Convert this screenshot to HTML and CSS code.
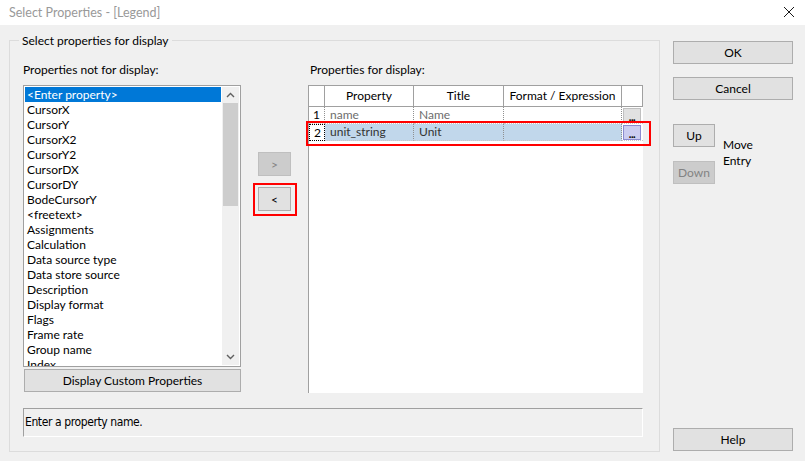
FILE: index.html
```html
<!DOCTYPE html>
<html lang="en">
<head>
    <meta charset="UTF-8">
    <title>Select Properties - [Legend]</title>
    <link rel="stylesheet" href="styles.css">
</head>
<body>
    <div class="titlebar">
        <span class="title">Select Properties - [Legend]</span>
        <svg class="close" width="12" height="12" viewBox="0 0 12 12">
            <path d="M1 1 L11 11 M11 1 L1 11" stroke="#1a1a1a" stroke-width="1" fill="none"/>
        </svg>
    </div>

    <div class="dialog">
        <div class="group">
            <span class="group-title">Select properties for display</span>
            <div class="columns">
                <div class="col-left">
                    <div class="label">Properties not for display:</div>
                    <div class="listbox">
                        <ul class="items">
                            <li class="selected">&lt;Enter property&gt;</li>
                            <li>CursorX</li>
                            <li>CursorY</li>
                            <li>CursorX2</li>
                            <li>CursorY2</li>
                            <li>CursorDX</li>
                            <li>CursorDY</li>
                            <li>BodeCursorY</li>
                            <li>&lt;freetext&gt;</li>
                            <li>Assignments</li>
                            <li>Calculation</li>
                            <li>Data source type</li>
                            <li>Data store source</li>
                            <li>Description</li>
                            <li>Display format</li>
                            <li>Flags</li>
                            <li>Frame rate</li>
                            <li>Group name</li>
                            <li>Index</li>
                        </ul>
                        <div class="scrollbar">
                            <span class="arrow">
                                <svg width="9" height="6" viewBox="0 0 9 6"><path d="M1 5 L4.5 1.5 L8 5" stroke="#606060" stroke-width="1.4" fill="none"/></svg>
                            </span>
                            <span class="thumb"></span>
                            <span class="arrow arrow-down">
                                <svg width="9" height="6" viewBox="0 0 9 6"><path d="M1 1 L4.5 4.5 L8 1" stroke="#606060" stroke-width="1.4" fill="none"/></svg>
                            </span>
                        </div>
                    </div>
                    <button class="btn btn-custom">Display Custom Properties</button>
                </div>

                <div class="col-move">
                    <button class="btn btn-arrow" disabled>&gt;</button>
                    <span class="mark mark-btn"><button class="btn btn-arrow">&lt;</button></span>
                </div>

                <div class="col-right">
                    <div class="label label-right">Properties for display:</div>
                    <div class="grid">
                        <div class="row head">
                            <div class="cell c-num"></div>
                            <div class="cell c-prop">Property</div>
                            <div class="cell c-title">Title</div>
                            <div class="cell c-fmt">Format / Expression</div>
                            <div class="cell c-btn"></div>
                        </div>
                        <div class="row">
                            <div class="cell c-num">1</div>
                            <div class="cell c-prop muted">name</div>
                            <div class="cell c-title muted">Name</div>
                            <div class="cell c-fmt"></div>
                            <div class="cell c-btn"><span class="dots">...</span></div>
                        </div>
                        <div class="row current mark mark-row">
                            <div class="cell c-num focus">2</div>
                            <div class="cell c-prop">unit_string</div>
                            <div class="cell c-title">Unit</div>
                            <div class="cell c-fmt"></div>
                            <div class="cell c-btn"><span class="dots dots-active">...</span></div>
                        </div>
                    </div>
                </div>
            </div>
            <div class="status">Enter a property name.</div>
        </div>

        <div class="side">
            <button class="btn btn-side">OK</button>
            <button class="btn btn-side btn-cancel">Cancel</button>
            <div class="move">
                <div class="move-btns">
                    <button class="btn btn-move">Up</button>
                    <button class="btn btn-move btn-down" disabled>Down</button>
                </div>
                <div class="move-label">Move<br>Entry</div>
            </div>
            <button class="btn btn-side btn-help">Help</button>
        </div>
    </div>
</body>
</html>
```

FILE: styles.css
```css
* {
    box-sizing: border-box;
}
body {
    margin: 0;
    width: 805px;
    height: 461px;
    overflow: hidden;
    background-color: #f0f0f0;
    font-family: Lato, "Noto Sans", sans-serif;
    font-size: 12px;
    color: #000;
}
.titlebar {
    height: 25px;
    background-color: #fff;
    display: flex;
    align-items: center;
    justify-content: space-between;
    padding: 0 10px 1px 9px;
}
.title {
    color: #999;
    font-size: 12.5px;
}
.dialog {
    display: flex;
    padding: 15px 0 0 9px;
}
.group {
    position: relative;
    width: 651px;
    height: 412px;
    border: 1px solid #dcdcdc;
    padding: 21px 0 0 13px;
}
.group-title {
    position: absolute;
    top: -8px;
    left: 9px;
    padding: 0 3px;
    line-height: 15px;
    background-color: #f0f0f0;
}
.columns {
    display: flex;
}
.label {
    line-height: 15px;
    margin-bottom: 8px;
}
.label-right {
    padding-left: 2px;
}
.col-left {
    width: 218px;
    display: flex;
    flex-direction: column;
}
.listbox {
    height: 282px;
    border: 1px solid #a0a0a0;
    background-color: #fff;
    display: flex;
    padding: 1px;
    overflow: hidden;
}
.items {
    list-style: none;
    margin: 0;
    padding: 0;
    width: 197px;
}
.items li {
    height: 15px;
    line-height: 15px;
    padding-left: 2px;
    white-space: nowrap;
}
.items li.selected {
    background-color: #0078d7;
    color: #fff;
}
.scrollbar {
    width: 17px;
    margin-left: 1px;
    background-color: #f0f0f0;
    display: flex;
    flex-direction: column;
}
.arrow {
    height: 16px;
    display: flex;
    align-items: center;
    justify-content: center;
}
.arrow-down {
    margin-top: auto;
}
.thumb {
    height: 103px;
    margin: 0 1px;
    background-color: #cdcdcd;
}
.btn {
    font-family: inherit;
    font-size: 12px;
    color: #000;
    background-color: #e1e1e1;
    border: 1px solid #adadad;
    padding: 0;
    height: 23px;
}
.btn:disabled {
    background-color: #cccccc;
    border-color: #bfbfbf;
    color: #838383;
}
.btn-custom {
    margin: 2px 0 0 1px;
    width: 217px;
}
.col-move {
    margin-left: 17px;
    width: 33px;
    display: flex;
    flex-direction: column;
    padding-top: 90px;
}
.btn-arrow {
    width: 33px;
    height: 24px;
}
.mark {
    position: relative;
}
.mark::after {
    content: "";
    position: absolute;
    border: 2px solid #ff0000;
    pointer-events: none;
}
.mark-btn {
    display: block;
    margin-top: 11px;
}
.mark-btn::after {
    top: -4px;
    left: -5px;
    right: -6px;
    bottom: -5px;
}
.col-right {
    margin-left: 17px;
    width: 335px;
    display: flex;
    flex-direction: column;
}
.grid {
    height: 308px;
    background-color: #fff;
    border-left: 1px solid #a0a0a0;
    border-top: 1px solid #a0a0a0;
}
.row {
    display: flex;
    height: 17px;
}
.row.head {
    height: 21px;
}
.cell {
    height: 100%;
    line-height: 16px;
    padding-left: 5px;
    border-right: 1px dotted #909090;
    border-bottom: 1px dotted #c8c8c8;
    white-space: nowrap;
    overflow: hidden;
}
.head .cell {
    line-height: 20px;
    text-align: center;
    padding-left: 0;
    border-right: 1px solid #a0a0a0;
    border-bottom: 1px solid #a0a0a0;
}
.c-num {
    width: 16px;
    padding-left: 4px;
}
.c-prop {
    width: 89px;
}
.c-title {
    width: 90px;
}
.c-fmt {
    width: 118px;
}
.c-btn {
    width: 21px;
    padding: 1px 0 0 1px;
    border-right: none;
}
.head .c-btn {
    border-right: 1px solid #a0a0a0;
}
.muted {
    color: #6d6d6d;
}
.current .c-prop,
.current .c-title,
.current .c-fmt {
    background-color: #c1d7eb;
    color: #333;
}
.focus {
    border: 1px dotted #000;
}
.dots {
    display: block;
    width: 18px;
    height: 15px;
    line-height: 16px;
    text-align: center;
    font-size: 11px;
    font-weight: bold;
    letter-spacing: -0.5px;
    background-color: #e1e1e1;
    border: 1px solid #c0c0c0;
}
.dots-active {
    background-color: #cccdf0;
    border-color: #8b8bd0;
}
.mark-row::after {
    top: -3px;
    left: -3px;
    right: -8px;
    bottom: -5px;
}
.status {
    margin-top: 15px;
    width: 620px;
    height: 29px;
    border-top: 1px solid #a0a0a0;
    border-left: 1px solid #a0a0a0;
    border-right: 1px solid #fff;
    border-bottom: 1px solid #fff;
    padding-left: 1px;
    line-height: 27px;
    font-family: "DejaVu Sans Condensed", "DejaVu Sans", sans-serif;
    font-stretch: condensed;
    font-size: 12px;
    letter-spacing: -0.4px;
}
.side {
    margin-left: 13px;
    width: 120px;
    height: 412px;
    padding: 1px 0 1px;
    display: flex;
    flex-direction: column;
}
.btn-side {
    width: 120px;
}
.btn-cancel {
    margin-top: 13px;
}
.move {
    display: flex;
    margin-top: 24px;
}
.move-btns {
    display: flex;
    flex-direction: column;
}
.btn-move {
    width: 42px;
}
.btn-down {
    margin-top: 14px;
}
.move-label {
    margin-left: 8px;
    padding-top: 13px;
    line-height: 16px;
}
.btn-help {
    margin-top: auto;
}
```
